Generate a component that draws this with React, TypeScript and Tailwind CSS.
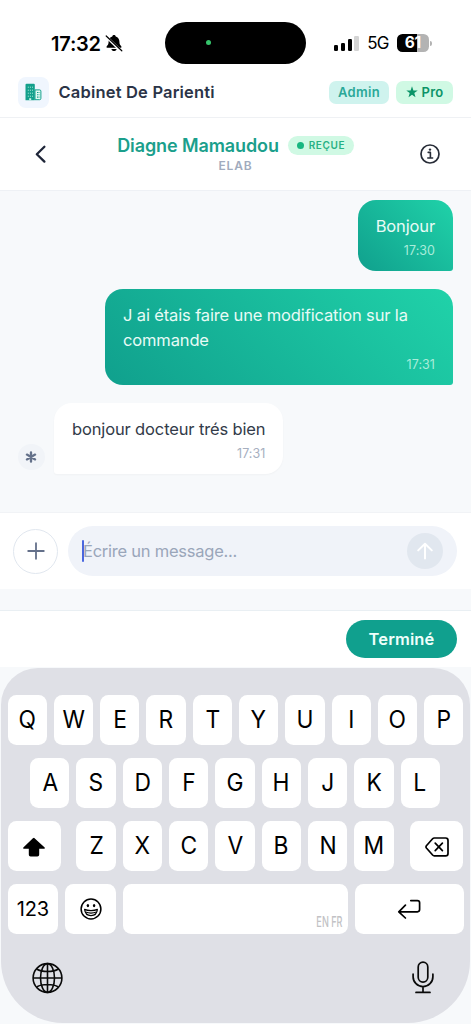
import { ReactNode } from "react";
import clsx from "clsx";

type Message = {
  id: number;
  text: string;
  time: string;
  mine: boolean;
};

const messages: Message[] = [
  { id: 1, text: "Bonjour", time: "17:30", mine: true },
  { id: 2, text: "J ai étais faire une modification sur la commande", time: "17:31", mine: true },
  { id: 3, text: "bonjour docteur trés bien", time: "17:31", mine: false },
];

const rows = ["QWERTYUIOP", "ASDFGHJKL", "ZXCVBNM"];

function StatusBar() {
  return (
    <div className="flex h-[68px] shrink-0 items-start pl-[51px] pr-[39px] pt-[22px]">
      <div className="flex h-[42px] w-[114px] items-center">
        <span className="w-[54px] whitespace-nowrap pt-[2px] text-[20px] font-semibold tracking-[-0.2px] text-black">
          17:32
        </span>
        {/* Silent mode bell */}
        <svg width="18" height="18" viewBox="0 0 18 18" className="shrink-0">
          <path
            d="M9 1C8 1 7.4 1.6 7.3 2.4C4.8 3.1 3.6 5 3.6 7.6C3.6 10.4 2.9 11 1.8 12.2C1.2 13 1.5 13.8 2.5 13.8H15.5C16.5 13.8 16.8 13 16.2 12.2C15.1 11 14.4 10.4 14.4 7.6C14.4 5 13.2 3.1 10.7 2.4C10.6 1.6 10 1 9 1Z"
            fill="#000"
          />
          <path d="M6.4 14.9H11.6C11.3 16.3 10.3 17.1 9 17.1C7.7 17.1 6.7 16.3 6.4 14.9Z" fill="#000" />
          <path d="M0.8 2.2L16 17" stroke="#fff" strokeWidth="2.6" />
          <path d="M1.2 2L16.8 16.8" stroke="#000" strokeWidth="1.2" strokeLinecap="round" />
        </svg>
      </div>

      <div className="flex h-[41.5px] w-[141px] items-center rounded-full bg-black pl-[40.5px]">
        <span className="h-[5px] w-[5px] rounded-full bg-[#35c46b]" />
      </div>

      <div className="flex h-[42px] flex-1 items-center pl-[28px]">
        <div className="flex h-[16px] items-end gap-[2.4px]">
          <span className="h-[6px] w-[4.4px] rounded-[1.3px] bg-black" />
          <span className="h-[8.5px] w-[4.4px] rounded-[1.3px] bg-black" />
          <span className="h-[12px] w-[4.4px] rounded-[1.3px] bg-black" />
          <span className="h-[15.5px] w-[4.4px] rounded-[1.3px] bg-[#d4d4d4]" />
        </div>
        <span className="ml-[8.5px] w-[29.5px] whitespace-nowrap pt-[2px] text-[17px] tracking-[-0.7px] text-black">
          5G
        </span>
        <div className="flex h-[17.5px] w-[32px] shrink-0 items-center justify-center rounded-[5.5px] bg-[linear-gradient(90deg,#000_62%,#b3b3b3_62%)] text-[15.5px] font-bold tracking-[-0.5px] text-white">
          61
        </div>
        <span className="ml-[1px] h-[5px] w-[2px] shrink-0 rounded-r-full bg-[#b3b3b3]" />
      </div>
    </div>
  );
}

function CabinetBar() {
  return (
    <div className="flex h-[50px] shrink-0 items-center border-b border-[#eff1f4] pb-px pl-[18px] pr-[18px]">
      <div className="flex h-[31px] w-[31px] items-center justify-center rounded-[8px] bg-[#f0f6fe]">
        <svg width="17" height="18" viewBox="0 0 17 18">
          <path d="M1.5 0.8H8.8A1 1 0 0 1 9.8 1.8V17.2H0.5V1.8A1 1 0 0 1 1.5 0.8Z" fill="#14a08c" />
          <path d="M10 6.9H14.6A1.3 1.3 0 0 1 15.9 8.2V15.4A1.3 1.3 0 0 1 14.6 16.7H10Z" fill="#e4faf3" stroke="#14a08c" strokeWidth="1" />
          <path d="M2.8 4.2H8M2.8 7.2H8M2.8 10.2H8M2.8 13.2H8" stroke="#a5e6d6" strokeWidth="1" strokeDasharray="1.1 1" />
          <path d="M4.2 15.2H6.2V17.2H4.2Z" fill="#c9f5e8" />
          <path d="M12 9.5H14.4M12 11.8H14.4M12 14.1H14.4" stroke="#14a08c" strokeWidth="1.1" strokeDasharray="1 .5" />
        </svg>
      </div>
      <span className="ml-[9.5px] whitespace-nowrap text-[16.5px] font-semibold tracking-[0.18px] text-[#2b3447]">
        Cabinet De Parienti
      </span>
      <div className="ml-auto flex gap-[7px]">
        <span className="flex h-[23px] w-[60px] items-center justify-center rounded-[7px] bg-[#cff3ee] pt-[2px] text-[13px] font-semibold tracking-[0.3px] text-[#2ba898]">
          Admin
        </span>
        <span className="flex h-[23px] w-[57px] items-center justify-center gap-[4px] rounded-[7px] bg-[#d0f9e4] pt-[2px] text-[13px] font-semibold tracking-[0.2px] text-[#0c9468]">
          <svg width="12" height="12" viewBox="0 0 12 12" className="mb-[2px]">
            <path d="M6 0.3L7.4 4.4H11.7L8.3 7L9.5 11.2L6 8.7L2.5 11.2L3.7 7L0.3 4.4H4.6Z" fill="currentColor" />
          </svg>
          Pro
        </span>
      </div>
    </div>
  );
}

function ChatHeader() {
  return (
    <div className="flex h-[73px] shrink-0 items-center justify-between border-b border-[#eef1f5] pl-[34px] pr-[30px]">
      <svg width="13" height="20" viewBox="0 0 13 20" fill="none" className="mb-px">
        <path d="M10.4 2.8L2.8 10.2L10.4 17.6" stroke="#1e2538" strokeWidth="2.3" strokeLinecap="round" strokeLinejoin="round" />
      </svg>
      <div className="flex flex-col items-center pl-[5px]">
        <div className="flex h-[22px] items-center gap-[9px]">
          <span className="whitespace-nowrap text-[18px] font-semibold tracking-[-0.1px] text-[#1b9f8c]">Diagne Mamaudou</span>
          <span className="flex h-[19px] w-[66px] items-center justify-center gap-[5px] rounded-full bg-[#d0f9e4]">
            <span className="h-[7px] w-[7px] rounded-full bg-[#18b780]" />
            <span className="text-[10px] font-semibold tracking-[0.6px] text-[#27b184]">REÇUE</span>
          </span>
        </div>
        <span className="mt-[2px] text-[12px] font-semibold leading-[16px] tracking-[0.8px] text-[#a1abbd]">ELAB</span>
      </div>
      <svg width="22" height="22" viewBox="0 0 22 22" fill="none" stroke="#272c37">
        <circle cx="11" cy="11" r="9" strokeWidth="1.7" />
        <path d="M9.2 9.4H11.4V14.8M8.8 15H13.6" strokeWidth="1.6" strokeLinecap="round" strokeLinejoin="round" />
        <circle cx="11" cy="6.6" r="1.2" fill="#272c37" stroke="none" />
      </svg>
    </div>
  );
}

function Bubble({ message }: { message: Message }) {
  return (
    <div className={clsx("flex items-end", message.mine ? "justify-end" : "justify-start")}>
      {!message.mine && (
        <span className="mb-[4px] mr-[9.5px] flex h-[26.5px] w-[26.5px] items-center justify-center rounded-full bg-[#f1f4f8]">
          <svg width="12" height="12" viewBox="0 0 12 12" stroke="#64718a" strokeWidth="2.3" strokeLinecap="round">
            <path d="M6 1.3V10.7M1.9 3.6L10.1 8.4M1.9 8.4L10.1 3.6" />
          </svg>
        </span>
      )}
      <div
        className={clsx(
          "max-w-[348px] rounded-[18px] px-[18px] pb-[11px] pt-[14px] text-[16.5px] leading-[25px]",
          message.mine
            ? "rounded-br-[3px] bg-linear-[45deg,#10a08d,#20d2a9] text-[#e8fbf6]"
            : "rounded-bl-[3px] bg-white text-[#333b49] shadow-[0_1px_2px_rgba(15,23,42,0.03)]"
        )}
      >
        <p className="tracking-[-0.14px]">{message.text}</p>
        <p
          className={clsx(
            "mt-[2px] text-right text-[12.5px] leading-[19px] tracking-[0.05px]",
            message.mine ? "text-[#a9ecda]" : "text-[#a6afbf]"
          )}
        >
          {message.time}
        </p>
      </div>
    </div>
  );
}

function Composer() {
  return (
    <div className="flex h-[77px] shrink-0 items-center border-t border-[#f1f3f6] bg-white pl-[13px] pr-[14px]">
      <button className="flex h-[45px] w-[45px] items-center justify-center rounded-full border border-[#e1e7ef]">
        <svg width="18" height="18" viewBox="0 0 18 18" stroke="#64708a" strokeWidth="1.8" strokeLinecap="round">
          <path d="M9 1.2V16.8M1.2 9H16.8" />
        </svg>
      </button>
      <div className="ml-[9.5px] flex h-[49.5px] flex-1 items-center rounded-full bg-[#f0f3f9] pl-[14.5px] pr-[14px]">
        <span className="h-[22px] w-[2px] rounded-full bg-[#4a67df]" />
        <span className="-ml-px whitespace-nowrap text-[16.5px] tracking-[-0.24px] text-[#9aa6ba]">
          Écrire un message...
        </span>
        <button className="ml-auto flex h-[36px] w-[36px] items-center justify-center rounded-full bg-[#e1e7ef]">
          <svg width="18" height="18" viewBox="0 0 18 18" fill="none" stroke="#fff" strokeWidth="2" strokeLinecap="round" strokeLinejoin="round">
            <path d="M9 16.5V1.8M2.2 8.4L9 1.8L15.8 8.4" />
          </svg>
        </button>
      </div>
    </div>
  );
}

function Key({ children, className }: { children?: ReactNode; className?: string }) {
  return (
    <button
      className={clsx(
        "flex h-[50px] shrink-0 items-center justify-center rounded-[8.5px] bg-white text-[24px] text-black",
        className ?? "w-[39.3px]"
      )}
    >
      {children}
    </button>
  );
}

function Letter({ children }: { children: string }) {
  return <span className="scale-x-95">{children}</span>;
}

function Keyboard() {
  const [top, middle, bottom] = rows.map((row) =>
    row.split("").map((letter) => (
      <Key key={letter}>
        <Letter>{letter}</Letter>
      </Key>
    ))
  );

  return (
    <div className="mx-px flex h-[355px] shrink-0 flex-col rounded-b-[62px] rounded-t-[37px] bg-[#dfe0e6] px-[6.5px] pt-[27px]">
      <div className="flex flex-col gap-[13px]">
        <div className="flex justify-between">{top}</div>
        <div className="flex justify-center gap-[7px] pr-px">{middle}</div>
        <div className="flex justify-between">
          <Key className="w-[53.5px]">
            <svg width="24" height="20" viewBox="0 0 24 20" className="mt-[2px]">
              <path
                d="M12 0.8L22.4 10.2C23.3 11 22.8 11.8 21.8 11.8H17.2V17.6C17.2 18.8 16.5 19.5 15.3 19.5H8.7C7.5 19.5 6.8 18.8 6.8 17.6V11.8H2.2C1.2 11.8 0.7 11 1.6 10.2L10.9 1.3C11.6 0.6 12.4 0.6 13.1 1.3Z"
                fill="#000"
              />
            </svg>
          </Key>
          <div className="flex gap-[7px] pr-px">{bottom}</div>
          <Key className="w-[53.5px]">
            <svg width="24" height="20" viewBox="0 0 24 20" fill="none" stroke="#000" strokeWidth="1.7" strokeLinecap="round" strokeLinejoin="round" className="mt-[2px]">
              <path d="M9.3 1H20.6Q23 1 23 3.4V16.4Q23 18.8 20.6 18.8H9.3Q8.3 18.8 7.6 18L1.4 11Q0.6 9.9 1.4 8.8L7.6 1.8Q8.3 1 9.3 1Z" />
              <path d="M10.2 6.2L17.4 13.6M17.4 6.2L10.2 13.6" />
            </svg>
          </Key>
        </div>
        <div className="flex gap-[7px]">
          <Key className="w-[50.5px] text-[20px]! tracking-[-0.2px]">123</Key>
          <Key className="w-[51px]">
            <svg width="22" height="22" viewBox="0 0 22 22" fill="none" stroke="#000" className="mb-px">
              <circle cx="11" cy="11" r="9.9" strokeWidth="1.5" />
              <path d="M4.6 11.4C7.8 13 14.2 13 17.4 11.4C17 15.2 14.4 17.6 11 17.6C7.6 17.6 5 15.2 4.6 11.4Z" strokeWidth="1.2" strokeLinejoin="round" />
              <path d="M5.6 14C8.6 15.2 13.4 15.2 16.4 14" strokeWidth="1.2" />
              <ellipse cx="7.9" cy="7.6" rx="1.2" ry="1.6" fill="#000" stroke="none" />
              <ellipse cx="14.1" cy="7.6" rx="1.2" ry="1.6" fill="#000" stroke="none" />
            </svg>
          </Key>
          <Key className="w-[225px] items-end! justify-end! pb-[3px] pr-[5px]">
            <span className="origin-right scale-x-[0.63] whitespace-nowrap text-[14.5px] font-medium leading-[18px] text-[#c2c2c5]">
              EN FR
            </span>
          </Key>
          <Key className="flex-1">
            <svg width="24" height="20" viewBox="0 0 24 20" fill="none" stroke="#000" strokeWidth="1.7" strokeLinecap="round" strokeLinejoin="round">
              <path d="M13.8 1.6H20.4Q22.6 1.6 22.6 3.8V10.6Q22.6 12.8 20.4 12.8H2M8.4 6.2L1.8 12.8L8.4 19" />
            </svg>
          </Key>
        </div>
      </div>

      <div className="flex items-start justify-between pl-[24.5px] pr-[30px] pt-[27px]">
        <svg width="31" height="32" viewBox="0 0 31 32" fill="none" stroke="#0a0a0a" strokeWidth="1.6" className="mt-px">
          <circle cx="15.5" cy="16" r="14.4" />
          <ellipse cx="15.5" cy="16" rx="7" ry="14.4" />
          <path d="M15.5 1.6V30.4M1.1 16H29.9M4.6 7C10 10.4 21 10.4 26.4 7M4.6 25C10 21.6 21 21.6 26.4 25" />
        </svg>
        <svg width="22" height="33" viewBox="0 0 22 33" fill="none" stroke="#0a0a0a" strokeWidth="1.7" strokeLinecap="round">
          <rect x="6.2" y="1.1" width="9.6" height="20" rx="4.8" />
          <path d="M1.1 13.2V15.7A9.9 9.9 0 0 0 20.9 15.7V13.2M11 25.6V31.4M4 31.4H18" />
        </svg>
      </div>
    </div>
  );
}

export default function App() {
  return (
    <div className="flex h-screen min-h-[1024px] w-full flex-col bg-[#f7f9fb] font-['Inter',sans-serif]">
      <div className="flex shrink-0 flex-col bg-white">
        <StatusBar />
        <CabinetBar />
        <ChatHeader />
      </div>

      <div className="flex flex-1 flex-col gap-[18px] pl-[18px] pr-[18px] pt-[9px]">
        {messages.map((message) => (
          <Bubble key={message.id} message={message} />
        ))}
      </div>

      <Composer />

      {/* Accessory bar above the keyboard */}
      <div className="mt-[21px] flex h-[57px] shrink-0 items-center justify-end border-t border-[#e9eff3] bg-white pr-[14px]">
        <button className="flex h-[38px] w-[111px] items-center justify-center rounded-full bg-[#10a08e] text-[16.5px] font-semibold tracking-[0.1px] text-[#effffb]">
          Terminé
        </button>
      </div>

      <div className="shrink-0 pb-px pt-px">
        <Keyboard />
      </div>
    </div>
  );
}
